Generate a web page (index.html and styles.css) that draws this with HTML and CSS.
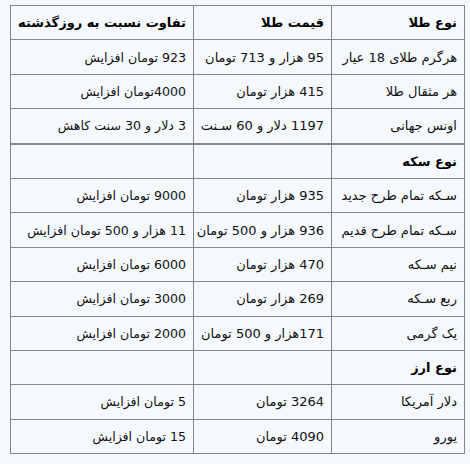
FILE: index.html
```html
<!DOCTYPE html>
<html lang="fa" dir="rtl">
<head>
<meta charset="utf-8">
<link rel="stylesheet" href="styles.css">
</head>
<body>
<table class="prices">
  <colgroup>
    <col class="c1"><col class="c2"><col class="c3">
  </colgroup>
  <tr><th>نوع طلا</th><th>قیمت طلا</th><th>تفاوت نسبت به روزگذشته</th></tr>
  <tr><td>هرگرم طلای 18 عیار</td><td>95 هزار و 713 تومان</td><td>923 تومان افزایش</td></tr>
  <tr><td>هر مثقال طلا</td><td>415 هزار تومان</td><td>4000تومان افزایش</td></tr>
  <tr><td>اونس جهانی</td><td>1197 دلار و 60 سـنت</td><td>3 دلار و 30 سنت كاهش</td></tr>
  <tr class="sep"><th>نوع سکه</th><td></td><td></td></tr>
  <tr><td>سـکه تمام طرح جدید</td><td>935 هزار تومان</td><td>9000 تومان افزایش</td></tr>
  <tr><td>سـکه تمام طرح قدیم</td><td>936 هزار و 500 تومان</td><td>11 هزار و 500 تومان افزایش</td></tr>
  <tr><td>نیم سـکه</td><td>470 هزار تومان</td><td>6000 تومان افزایش</td></tr>
  <tr><td>ربع سـکه</td><td>269 هزار تومان</td><td>3000 تومان افزایش</td></tr>
  <tr><td>یک گرمی</td><td>171هزار و 500 تومان</td><td>2000 تومان افزایش</td></tr>
  <tr><th>نوع ارز</th><td></td><td></td></tr>
  <tr><td>دلار آمریکا</td><td>3264 تومان</td><td>5 تومان افزایش</td></tr>
  <tr><td>یورو</td><td>4090 تومان</td><td>15 تومان افزایش</td></tr>
</table>
</body>
</html>
```

FILE: styles.css
```css
html, body {
  margin: 0;
  padding: 0;
  background: #f5f9fe;
}
body {
  padding: 5px 5px 0 11px;
  font-family: "DejaVu Sans", sans-serif;
  font-size: 13px;
  color: #111;
}
.prices {
  border-collapse: collapse;
  table-layout: fixed;
  width: 454px;
}
.c1 { width: 133px; }
.c2 { width: 138px; }
.c3 { width: 183px; }
.prices th, .prices td {
  border: 1px solid #858585;
  height: 33.4px;
  padding: 0 7px;
  text-align: right;
  vertical-align: middle;
  white-space: nowrap;
  overflow: visible;
}
.prices th {
  font-weight: bold;
  color: #000;
}
.prices tr.sep th, .prices tr.sep td {
  border-top: 2px solid #858585;
}
.prices td:nth-child(3) {
  font-size: 12.6px;
}
```
